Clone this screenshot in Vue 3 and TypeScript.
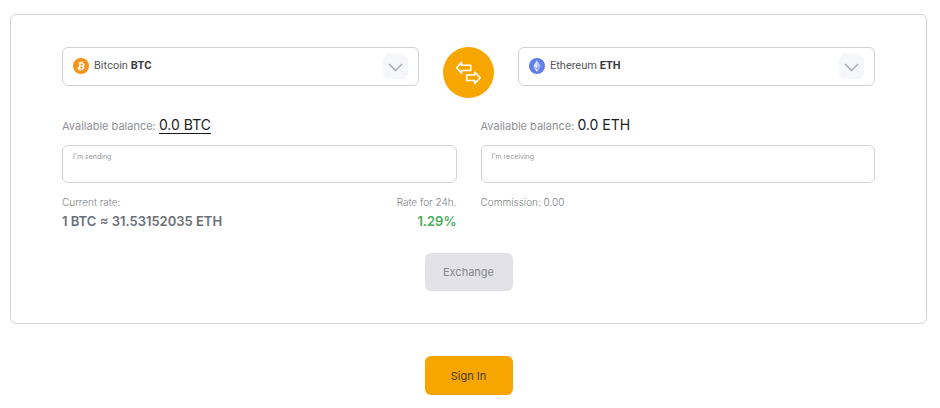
<script setup lang="ts">
import { ref } from 'vue'

interface Coin {
  code: string
  name: string
}

const coins: Coin[] = [
  { code: 'BTC', name: 'Bitcoin' },
  { code: 'ETH', name: 'Ethereum' },
]

const from = ref('BTC')
const to = ref('ETH')
const sending = ref('')
const receiving = ref('')

const nameOf = (code: string): string => coins.find((c) => c.code === code)?.name ?? ''

function swap(): void {
  const previous = from.value
  from.value = to.value
  to.value = previous
}
</script>

<template>
  <main class="page">
    <section class="card">
      <div class="pair">
        <div class="picker">
          <div class="face" aria-hidden="true">
            <svg v-if="from === 'BTC'" class="coin" viewBox="0 0 32 32">
              <circle cx="16" cy="16" r="16" fill="#f7931a" />
              <path fill="#fff" d="M23.2 14c.3-2.1-1.3-3.2-3.5-4l.7-2.9-1.7-.4-.7 2.8-1.4-.3.7-2.8-1.7-.4-.7 2.9-3.5-.9-.5 1.9s1.3.3 1.2.3c.7.2.8.6.8 1l-2 7.9c-.1.2-.3.6-.8.4l-1.2-.3-.9 2 3.4.9-.7 2.9 1.7.4.7-2.9 1.4.4-.7 2.8 1.7.4.7-2.9c3 .6 5.2.3 6.1-2.3.8-2.1 0-3.4-1.5-4.2 1.1-.3 1.9-1 2.4-2.7zm-3.9 5.5c-.5 2.2-4.2 1-5.4.7l1-3.9c1.2.3 5 .9 4.4 3.2zm.5-5.5c-.5 2-3.5 1-4.5.7l.9-3.5c1 .2 4.2.7 3.6 2.8z" />
            </svg>
            <svg v-else class="coin" viewBox="0 0 32 32">
              <circle cx="16" cy="16" r="16" fill="#627eea" />
              <path fill="#fff" fill-opacity=".55" d="M16 4v9l7.5 3.3zM16 22v6l7.5-10.4zM16 20.6l7.5-4.3L16 13z" />
              <path fill="#fff" fill-opacity=".8" d="M16 4 8.5 16.3 16 20.6zM16 22l-7.5-4.4L16 28z" />
            </svg>
            <span class="coin-name">{{ nameOf(from) }} <b>{{ from }}</b></span>
            <span class="arrow"><svg viewBox="0 0 25 25"><path d="M6 10l6.500 6.500L19 10" /></svg></span>
          </div>
          <select v-model="from" aria-label="Currency to send">
            <option v-for="c in coins" :key="c.code" :value="c.code">{{ c.name }} {{ c.code }}</option>
          </select>
        </div>

        <button class="swap" type="button" aria-label="Swap currencies" @click="swap">
          <svg viewBox="0 0 27 25">
            <path d="M1.700 7.700 6.500 2.400v2.900h9.200v5.200H6.500v2.700z" />
            <path d="M25.300 17.800 19.700 12.300V15h-8v5.500h8v3z" />
          </svg>
        </button>

        <div class="picker">
          <div class="face" aria-hidden="true">
            <svg v-if="to === 'BTC'" class="coin" viewBox="0 0 32 32">
              <circle cx="16" cy="16" r="16" fill="#f7931a" />
              <path fill="#fff" d="M23.2 14c.3-2.1-1.3-3.2-3.5-4l.7-2.9-1.7-.4-.7 2.8-1.4-.3.7-2.8-1.7-.4-.7 2.9-3.5-.9-.5 1.9s1.3.3 1.2.3c.7.2.8.6.8 1l-2 7.9c-.1.2-.3.6-.8.4l-1.2-.3-.9 2 3.4.9-.7 2.9 1.7.4.7-2.9 1.4.4-.7 2.8 1.7.4.7-2.9c3 .6 5.2.3 6.1-2.3.8-2.1 0-3.4-1.5-4.2 1.1-.3 1.9-1 2.4-2.7zm-3.9 5.5c-.5 2.2-4.2 1-5.4.7l1-3.9c1.2.3 5 .9 4.4 3.2zm.5-5.5c-.5 2-3.5 1-4.5.7l.9-3.5c1 .2 4.2.7 3.6 2.8z" />
            </svg>
            <svg v-else class="coin" viewBox="0 0 32 32">
              <circle cx="16" cy="16" r="16" fill="#627eea" />
              <path fill="#fff" fill-opacity=".55" d="M16 4v9l7.5 3.3zM16 22v6l7.5-10.4zM16 20.6l7.5-4.3L16 13z" />
              <path fill="#fff" fill-opacity=".8" d="M16 4 8.5 16.3 16 20.6zM16 22l-7.5-4.4L16 28z" />
            </svg>
            <span class="coin-name">{{ nameOf(to) }} <b>{{ to }}</b></span>
            <span class="arrow"><svg viewBox="0 0 25 25"><path d="M6 10l6.500 6.500L19 10" /></svg></span>
          </div>
          <select v-model="to" aria-label="Currency to receive">
            <option v-for="c in coins" :key="c.code" :value="c.code">{{ c.name }} {{ c.code }}</option>
          </select>
        </div>
      </div>

      <div class="sides">
        <div class="side">
          <p class="balance">Available balance: <a class="amount link" href="#">0.0 {{ from }}</a></p>
          <div class="field">
            <label for="sending">I'm sending</label>
            <input id="sending" v-model="sending" type="text" inputmode="decimal" />
          </div>
          <div class="details">
            <div>
              <p class="caption">Current rate:</p>
              <p class="value">1 BTC ≈ 31.53152035 ETH</p>
            </div>
            <div class="day">
              <p class="caption">Rate for 24h.</p>
              <p class="value up">1.29%</p>
            </div>
          </div>
        </div>
        <div class="side">
          <p class="balance">Available balance: <span class="amount">0.0 {{ to }}</span></p>
          <div class="field">
            <label for="receiving">I'm receiving</label>
            <input id="receiving" v-model="receiving" type="text" inputmode="decimal" />
          </div>
          <div class="details">
            <p class="caption">Commission: 0.00</p>
          </div>
        </div>
      </div>

      <button class="action" type="button" disabled>Exchange</button>
    </section>

    <button class="action primary" type="button">Sign In</button>
  </main>
</template>

<style>
body {
  background: #fff;
}
</style>

<style scoped>
.page {
  box-sizing: border-box;
  padding: 14px 13px 13px 10px;
  font-family: Inter, "Liberation Sans", sans-serif;
  color: #8d9096;
}

.page * {
  box-sizing: border-box;
}

p {
  margin: 0;
}

.card {
  padding: 32px 51px;
  border: 1px solid #d2d2d4;
  border-radius: 6px;
}

.pair {
  display: flex;
  align-items: flex-start;
  gap: 24px;
}

.picker {
  display: grid;
  flex: 1;
  border: 1px solid #d2d2d6;
  border-radius: 6px;
}

.picker:focus-within,
.field:focus-within {
  border-color: #f7a600;
}

.face,
.picker select {
  grid-area: 1 / 1;
}

.picker select {
  width: 100%;
  opacity: 0;
  cursor: pointer;
}

.face {
  display: flex;
  align-items: center;
  padding: 6px 10px;
  font: 11px/18px Roboto, sans-serif;
  color: #55575c;
}

.coin {
  width: 16px;
  height: 16px;
  margin: 0 5px 2px 0;
}

.coin-name {
  flex: 1;
  padding-bottom: 1px;
}

.coin-name b {
  font-weight: 700;
  color: #3a3b40;
}

.arrow {
  width: 25px;
  height: 25px;
  border-radius: 6px;
  background: #f6f7fa;
}

.arrow svg {
  display: block;
  fill: none;
  stroke: #a9abb6;
  stroke-width: 1.5;
}

.swap {
  display: grid;
  place-items: center;
  width: 51px;
  height: 51px;
  padding: 0;
  border: 0;
  border-radius: 50%;
  background: #f7a600;
  cursor: pointer;
}

.swap svg {
  width: 27px;
  height: 25px;
  fill: none;
  stroke: #fff;
  stroke-width: 1.6;
  stroke-linejoin: round;
}

.sides {
  display: grid;
  grid-template-columns: 1fr 1fr;
  gap: 24px;
  margin-top: 17px;
}

.balance {
  height: 20px;
  font-size: 11px;
  line-height: 20px;
}

.amount {
  font-size: 14px;
  color: #1c1c1e;
}

.link {
  border-bottom: 1px solid #1c1c1e;
  text-decoration: none;
}

.field {
  display: flex;
  flex-direction: column;
  height: 38px;
  margin-top: 10px;
  padding: 5px 10px;
  border: 1px solid #d2d2d6;
  border-radius: 6px;
}

.field label {
  font-size: 7px;
  line-height: 12px;
  color: #96989e;
}

.field input {
  width: 100%;
  height: 14px;
  padding: 0;
  border: 0;
  outline: 0;
  background: transparent;
  font: 12px/14px Inter, sans-serif;
  color: #1c1c1e;
}

.details {
  display: flex;
  justify-content: space-between;
  margin-top: 10px;
}

.day {
  text-align: right;
}

.caption {
  font-size: 10px;
  font-weight: 300;
  line-height: 18px;
  color: #7c7f86;
}

.value {
  font-size: 13px;
  font-weight: 600;
  line-height: 20px;
  color: #6b7078;
}

.up {
  color: #4bab5c;
}

.action {
  display: block;
  width: 88px;
  height: 38px;
  margin: 22px auto 0;
  padding: 0;
  border: 0;
  border-radius: 6px;
  background: #e3e2e8;
  font: 11px/16px Inter, sans-serif;
  color: #84878e;
}

.primary {
  height: 39px;
  margin-top: 32px;
  background: #f7a600;
  color: #4d3a10;
  cursor: pointer;
}
</style>
